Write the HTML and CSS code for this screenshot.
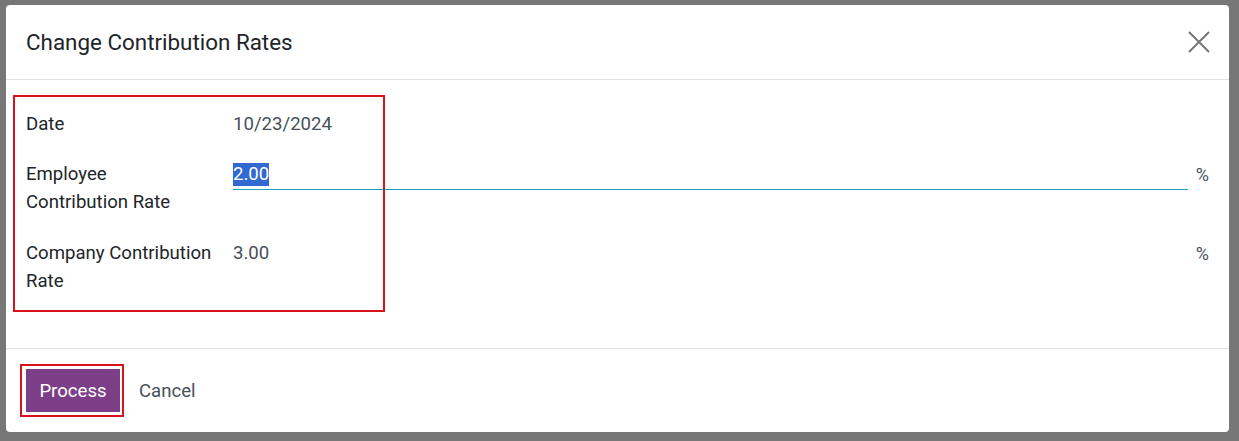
FILE: index.html
```html
<!DOCTYPE html>
<html>
<head>
  <title>Change Contribution Rates</title>
  <link rel="stylesheet" href="styles.css">
</head>
<body>
  <div class="modal">
    <div class="modal-header">
      <h4 class="modal-title">Change Contribution Rates</h4>
      <button type="button" class="btn-close" aria-label="Close">
        <svg width="22" height="22" viewBox="0 0 22 22">
          <path d="M1 1 L21 21 M21 1 L1 21" stroke="#767676" stroke-width="2" fill="none"/>
        </svg>
      </button>
    </div>

    <div class="modal-body">
      <div class="form-grid">
        <div class="annotation"></div>

        <label class="field-label">Date</label>
        <div class="field-value">10/23/2024</div>
        <div class="field-unit"></div>

        <label class="field-label">Employee<br>Contribution Rate</label>
        <div class="field-input"><span class="selected">2.00</span></div>
        <div class="field-unit">%</div>

        <label class="field-label last-row">Company Contribution Rate</label>
        <div class="field-value last-row">3.00</div>
        <div class="field-unit last-row">%</div>
      </div>
    </div>

    <div class="modal-footer">
      <span class="highlight">
        <button type="button" class="btn-primary">Process</button>
      </span>
      <button type="button" class="btn-secondary">Cancel</button>
    </div>
  </div>
</body>
</html>
```

FILE: styles.css
```css
body {
  margin: 0;
  background-color: #777777;
  font-family: Roboto, "Liberation Sans", sans-serif;
  color: #212529;
}

.modal {
  margin: 5px 0 0 6px;
  width: 1223px;
  height: 427px;
  background-color: #ffffff;
  border-radius: 4px;
  display: flex;
  flex-direction: column;
}

.modal-header {
  height: 74px;
  padding: 0 19px 0 20px;
  display: flex;
  align-items: center;
  justify-content: space-between;
  border-bottom: 1px solid #dee2e6;
}

.modal-title {
  margin: 0;
  font-size: 22.4px;
  font-weight: 400;
  color: #212529;
}

.btn-close {
  border: none;
  background: none;
  padding: 0;
  width: 22px;
  height: 22px;
  cursor: pointer;
}

.modal-body {
  flex: 1;
  padding: 30px 20px 0 20px;
}

.form-grid {
  position: relative;
  display: grid;
  grid-template-columns: 207px 1fr 21px;
  row-gap: 22px;
  font-size: 18.6px;
  line-height: 28px;
}

.last-row {
  margin-top: 1px;
}

.annotation {
  position: absolute;
  left: -13px;
  top: -15px;
  width: 368px;
  height: 213px;
  border: 2px solid #d9121b;
  pointer-events: none;
}

.field-label {
  color: #212529;
}

.field-value {
  color: #495057;
}

.field-input {
  height: 29px;
  border-bottom: 1px solid #1aa3b5;
  color: #495057;
}

.selected {
  display: inline-block;
  background-color: #3168d2;
  color: #ffffff;
  line-height: 23px;
  margin-top: 3px;
}

.field-unit {
  color: #495057;
  text-align: right;
  font-size: 18px;
  padding-top: 1px;
}

.modal-footer {
  height: 83px;
  padding: 0 14px;
  border-top: 1px solid #dee2e6;
  display: flex;
  align-items: center;
}

.highlight {
  display: inline-block;
  border: 2px solid #d9121b;
  padding: 3px 2px 3px 4px;
}

.btn-primary {
  display: block;
  width: 94px;
  height: 43px;
  border: none;
  background-color: #7c3f87;
  color: #ffffff;
  font-family: Roboto, "Liberation Sans", sans-serif;
  font-size: 18.6px;
  cursor: pointer;
}

.btn-secondary {
  margin-left: 9px;
  border: none;
  background: none;
  color: #495057;
  font-family: Roboto, "Liberation Sans", sans-serif;
  font-size: 18.6px;
  padding: 8px 6px;
  cursor: pointer;
}
```
